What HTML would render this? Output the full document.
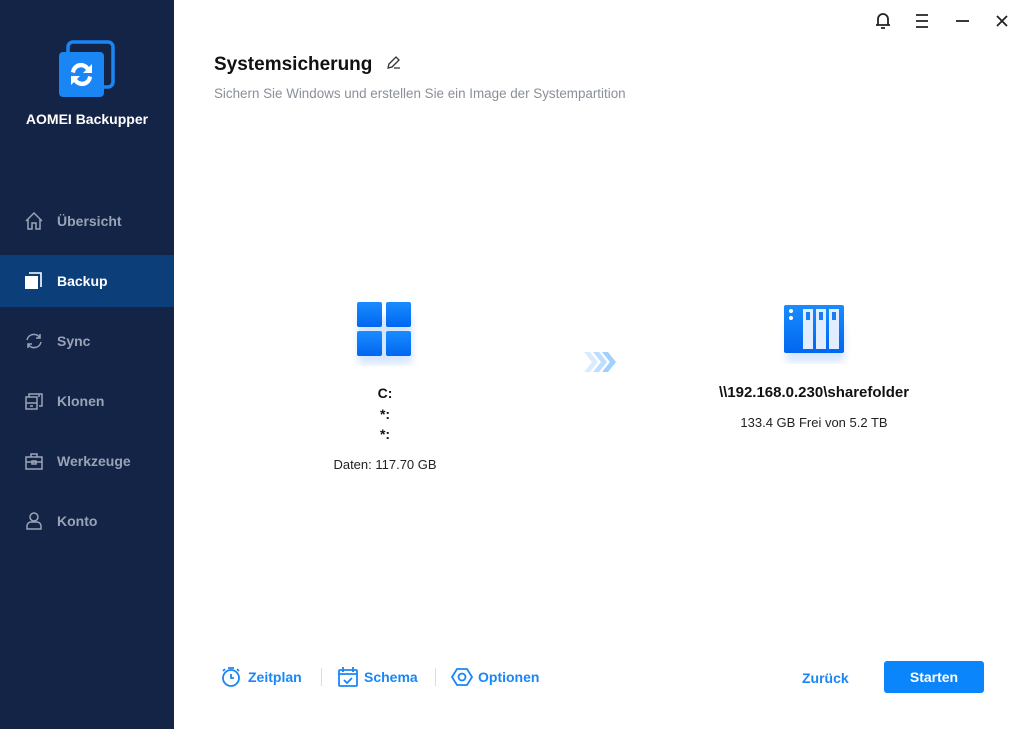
<!DOCTYPE html>
<html><head><meta charset="utf-8"><style>
*{margin:0;padding:0;box-sizing:border-box}
body{width:1024px;height:729px;overflow:hidden;background:#fff;font-family:"Liberation Sans",sans-serif;position:relative}
.side{position:absolute;left:0;top:0;width:174px;height:729px;background:#142447}
.brand{position:absolute;top:111px;left:0;width:174px;text-align:center;color:#fff;font-weight:bold;font-size:14px}
.nav{position:absolute;left:0;width:174px;height:52px;color:#9aa3b6;font-size:14px;font-weight:bold}
.nav span{position:absolute;left:57px;top:18px}
.nav svg{position:absolute;left:24px;top:16px}
.nav.act{background:#0c3f7a;color:#fff}
.t{position:absolute;white-space:nowrap}
.c{position:absolute;text-align:center;white-space:nowrap;transform:translateX(-50%)}
.blue{color:#1a86f5;font-weight:bold;font-size:14px}
</style></head><body>
<div class="side">
<svg style="position:absolute;left:58px;top:40px" width="58" height="58" viewBox="0 0 58 58">
<rect x="10" y="2" width="45" height="45" rx="5" fill="none" stroke="#1a86f5" stroke-width="3.5"/>
<rect x="1" y="12" width="45" height="45" rx="4" fill="#1a86f5"/>
<path d="M13 32a10 10 0 0 1 18-5l3-3v9h-9l3-3a6 6 0 0 0-11 3z" fill="#fff"/>
<path d="M34 37a10 10 0 0 1-18 5l-3 3v-9h9l-3 3a6 6 0 0 0 11-3z" fill="#fff"/>
</svg>
<div class="brand">AOMEI Backupper</div>
<div class="nav" style="top:195px"><svg width="20" height="20" viewBox="0 0 20 20" fill="none" stroke="#9aa3b6" stroke-width="1.5"><path d="M2 10L10 2l8 8M4 8v10h4v-6h4v6h4V8"/></svg><span>Übersicht</span></div>
<div class="nav act" style="top:255px"><svg width="20" height="20" viewBox="0 0 20 20"><rect x="1" y="5" width="13" height="13" fill="#fff"/><path d="M5 2h12v14" fill="none" stroke="#fff" stroke-width="1.6"/></svg><span>Backup</span></div>
<div class="nav" style="top:315px"><svg width="20" height="20" viewBox="0 0 20 20" fill="none" stroke="#9aa3b6" stroke-width="1.5"><path d="M3 9a7 7 0 0 1 13-2M17 11a7 7 0 0 1-13 2M16 3v4h-4M4 17v-4h4"/></svg><span>Sync</span></div>
<div class="nav" style="top:375px"><svg width="20" height="20" viewBox="0 0 20 20" fill="none" stroke="#9aa3b6" stroke-width="1.5"><rect x="2" y="6" width="11" height="12"/><path d="M2 12h11M6 15h3M5 6V3h10v3M15 3h3v12h-3"/></svg><span>Klonen</span></div>
<div class="nav" style="top:435px"><svg width="20" height="20" viewBox="0 0 20 20" fill="none" stroke="#9aa3b6" stroke-width="1.5"><rect x="2" y="6" width="16" height="12"/><path d="M7 6V3h6v3M2 11h16"/><rect x="8" y="10" width="4" height="3"/></svg><span>Werkzeuge</span></div>
<div class="nav" style="top:495px"><svg width="20" height="20" viewBox="0 0 20 20" fill="none" stroke="#9aa3b6" stroke-width="1.5"><circle cx="10" cy="6" r="4"/><path d="M3 18v-3a4 4 0 0 1 4-4h6a4 4 0 0 1 4 4v3z"/></svg><span>Konto</span></div>
</div>
<svg style="position:absolute;left:874px;top:12px" width="140" height="18" viewBox="0 0 140 18" fill="none" stroke="#222" stroke-width="1.8">
<path d="M4 13V7a5 5 0 0 1 10 0v6M2 13h14M7 16h4"/>
<path d="M42 3h12M42 9h12M42 15h12"/>
<path d="M82 9h13"/>
<path d="M123 4l10 10M133 4l-10 10"/>
</svg>
<div class="t" style="left:214px;top:54px;font-size:19px;font-weight:bold;color:#111">Systemsicherung</div>
<svg style="position:absolute;left:386px;top:55px" width="16" height="16" viewBox="0 0 16 16" fill="none" stroke="#333" stroke-width="1.3"><path d="M2 13l1-4 7-7 3 3-7 7z M8 13h6"/></svg>
<div class="t" style="left:214px;top:86px;font-size:13.4px;color:#8a8f99">Sichern Sie Windows und erstellen Sie ein Image der Systempartition</div>
<svg style="position:absolute;left:350px;top:296px" width="70" height="70" viewBox="0 0 70 70">
<defs><linearGradient id="g" x1="0" y1="0" x2="0" y2="1"><stop offset="0" stop-color="#1a8cff"/><stop offset="1" stop-color="#0066f0"/></linearGradient><filter id="s"><feGaussianBlur stdDeviation="4"/></filter></defs>
<rect x="8" y="20" width="54" height="48" fill="#bcd4ff" opacity=".6" filter="url(#s)"/>
<rect x="7" y="6" width="25" height="25" rx="2" fill="url(#g)"/><rect x="36" y="6" width="25" height="25" rx="2" fill="url(#g)"/>
<rect x="7" y="35" width="25" height="25" rx="2" fill="url(#g)"/><rect x="36" y="35" width="25" height="25" rx="2" fill="url(#g)"/>
</svg>
<svg style="position:absolute;left:582px;top:352px" width="34" height="20" viewBox="0 0 34 20" fill="#9fd0ff"><path d="M2 0h6l8 10-8 10H2l8-10z" opacity=".4"/><path d="M11 0h6l8 10-8 10h-6l8-10z" opacity=".7"/><path d="M20 0h6l8 10-8 10h-6l8-10z"/></svg>
<svg style="position:absolute;left:778px;top:300px" width="72" height="64" viewBox="0 0 72 64">
<rect x="8" y="22" width="58" height="40" fill="#bcd4ff" opacity=".6" filter="url(#s)"/>
<rect x="6" y="5" width="60" height="48" rx="2" fill="url(#g)"/>
<circle cx="13" cy="11" r="2" fill="#fff"/><circle cx="13" cy="18" r="2" fill="#fff"/>
<rect x="25" y="9" width="10" height="40" fill="#e2edff"/><rect x="38" y="9" width="10" height="40" fill="#e2edff"/><rect x="51" y="9" width="10" height="40" fill="#e2edff"/>
<rect x="28" y="12" width="4" height="8" fill="#1a7cf5"/><rect x="41" y="12" width="4" height="8" fill="#1a7cf5"/><rect x="54" y="12" width="4" height="8" fill="#1a7cf5"/>
</svg>
<div class="c" style="left:385px;top:385px;font-size:14px;font-weight:bold;color:#111">C:</div>
<div class="c" style="left:385px;top:406px;font-size:14px;font-weight:bold;color:#111">*:</div>
<div class="c" style="left:385px;top:426px;font-size:14px;font-weight:bold;color:#111">*:</div>
<div class="c" style="left:385px;top:457px;font-size:13px;color:#222">Daten: 117.70 GB</div>
<div class="c" style="left:814px;top:384px;font-size:15px;font-weight:bold;color:#111">\\192.168.0.230\sharefolder</div>
<div class="c" style="left:814px;top:415px;font-size:13px;color:#222">133.4 GB Frei von 5.2 TB</div>
<svg style="position:absolute;left:221px;top:666px" width="22" height="22" viewBox="0 0 22 22" fill="none" stroke="#1a86f5" stroke-width="1.8"><circle cx="10" cy="12" r="8"/><path d="M7 2h6M10 8v4h3M2 5l2-2M18 5l-2-2"/></svg>
<div class="t blue" style="left:248px;top:669px">Zeitplan</div>
<div style="position:absolute;left:321px;top:668px;width:1px;height:18px;background:#ddd"></div>
<svg style="position:absolute;left:337px;top:666px" width="22" height="22" viewBox="0 0 22 22" fill="none" stroke="#1a86f5" stroke-width="1.8"><rect x="2" y="4" width="18" height="16" rx="1"/><path d="M2 8h18M6 1v5M16 1v5M7 14l3 3 5-5"/></svg>
<div class="t blue" style="left:364px;top:669px">Schema</div>
<div style="position:absolute;left:435px;top:668px;width:1px;height:18px;background:#ddd"></div>
<svg style="position:absolute;left:451px;top:666px" width="22" height="22" viewBox="0 0 22 22" fill="none" stroke="#1a86f5" stroke-width="1.8"><path d="M6 3h10l5 8-5 8H6l-5-8z"/><circle cx="11" cy="11" r="3.5"/></svg>
<div class="t blue" style="left:478px;top:669px">Optionen</div>
<div class="t blue" style="left:802px;top:670px">Zurück</div>
<div style="position:absolute;left:884px;top:661px;width:100px;height:32px;background:#0a85fb;border-radius:3px;color:#fff;font-weight:bold;font-size:14px;text-align:center;line-height:33px">Starten</div>
</body></html>
